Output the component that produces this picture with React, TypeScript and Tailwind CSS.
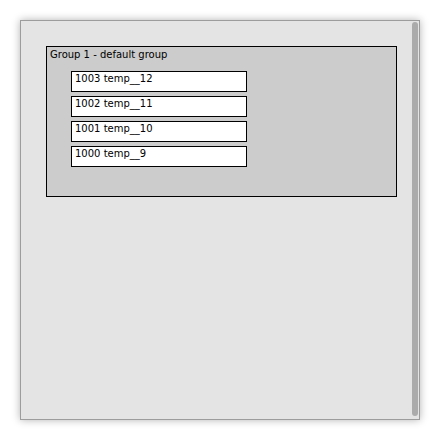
import React from "react";

const items = ["1003 temp__12", "1002 temp__11", "1001 temp__10", "1000 temp__9"];

export default function App() {
  return (
    <div className="w-[440px] h-[440px] bg-white p-5" style={{ fontFamily: '"DejaVu Sans", sans-serif' }}>
      <div className="w-[400px] h-[400px] border border-[#9c9c9c] bg-[#e4e4e4] shadow-[0_0_8px_rgba(0,0,0,0.3)] flex">
        <div className="flex-1 pl-[25px] pt-[25px]">
          <div className="w-[351px] h-[151px] border border-black bg-[#cccccc] pl-[3px] pt-px text-black">
            <div className="text-[10px] leading-[14px]">Group 1 - default group</div>
            <div className="flex flex-col gap-1 ml-[21px] mt-[9px]">
              {items.map((t) => (
                <div
                  key={t}
                  className="w-[176px] h-[21px] border border-black bg-white pl-[3px] text-[10px] leading-[14px]"
                >
                  {t}
                </div>
              ))}
            </div>
          </div>
        </div>
        <div className="w-[7px] pt-px pb-[3px] pr-px">
          <div className="w-[6px] h-full rounded-[3px] bg-[#ababab]" />
        </div>
      </div>
    </div>
  );
}
